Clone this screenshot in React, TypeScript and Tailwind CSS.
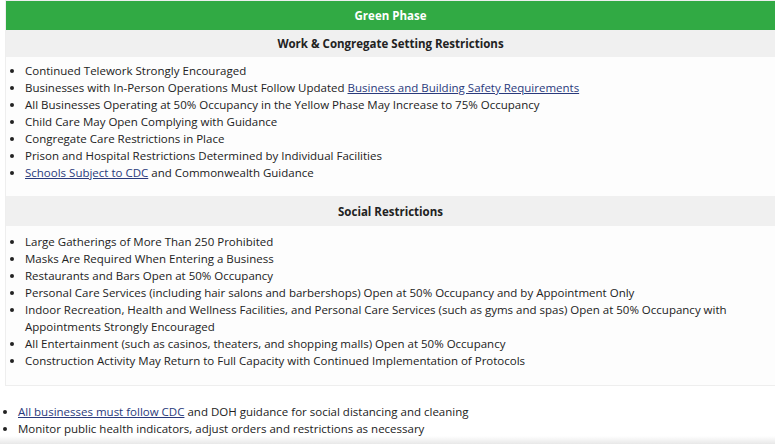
import React from 'react';

const L: React.FC<{ children: React.ReactNode }> = ({ children }) => <a className="text-[#2a3a7c] underline">{children}</a>;

const work: React.ReactNode[] = [
  'Continued Telework Strongly Encouraged',
  <>Businesses with In-Person Operations Must Follow Updated <L>Business and Building Safety Requirements</L></>,
  'All Businesses Operating at 50% Occupancy in the Yellow Phase May Increase to 75% Occupancy',
  'Child Care May Open Complying with Guidance',
  'Congregate Care Restrictions in Place',
  'Prison and Hospital Restrictions Determined by Individual Facilities',
  <><L>Schools Subject to CDC</L> and Commonwealth Guidance</>,
];

const social: React.ReactNode[] = [
  'Large Gatherings of More Than 250 Prohibited',
  'Masks Are Required When Entering a Business',
  'Restaurants and Bars Open at 50% Occupancy',
  'Personal Care Services (including hair salons and barbershops) Open at 50% Occupancy and by Appointment Only',
  'Indoor Recreation, Health and Wellness Facilities, and Personal Care Services (such as gyms and spas) Open at 50% Occupancy with Appointments Strongly Encouraged',
  'All Entertainment (such as casinos, theaters, and shopping malls) Open at 50% Occupancy',
  'Construction Activity May Return to Full Capacity with Continued Implementation of Protocols',
];

const List: React.FC<{ items: React.ReactNode[] }> = ({ items }) => (
  <ul className="list-disc pl-[19px] pr-2 py-[5px]">
    {items.map((t, i) => <li key={i} className="leading-[17px]">{t}</li>)}
  </ul>
);

export default function App() {
  return (
    <div className="w-[775px] h-[444px] overflow-hidden bg-white text-[11.5px] text-[#222] relative" style={{ fontFamily: '"Open Sans", sans-serif' }}>
      <div className="ml-[5px] border border-[#eee] border-r-0">
        <div className="h-[29px] bg-[#31aa44] text-white font-bold flex items-center justify-center">Green Phase</div>
        <div className="h-[28px] bg-[#f0f0f0] font-bold flex items-center justify-center">Work &amp; Congregate Setting Restrictions</div>
        <div className="bg-[#fdfdfd] pb-[10px] -mt-px"><List items={work} /></div>
        <div className="h-[30px] bg-[#f0f0f0] font-bold flex items-center justify-center pt-[2px]">Social Restrictions</div>
        <div className="bg-[#fdfdfd] h-[159px] pt-[2px]"><List items={social} /></div>
      </div>
      <ul className="list-disc pl-[18px] mt-[17px]">
        <li className="leading-[17px]"><L>All businesses must follow CDC</L> and DOH guidance for social distancing and cleaning</li>
        <li className="leading-[17px]">Monitor public health indicators, adjust orders and restrictions as necessary</li>
      </ul>
      <div className="absolute bottom-0 left-0 right-0 h-[8px] bg-gradient-to-b from-white to-[#e8e8e8]" />
    </div>
  );
}
